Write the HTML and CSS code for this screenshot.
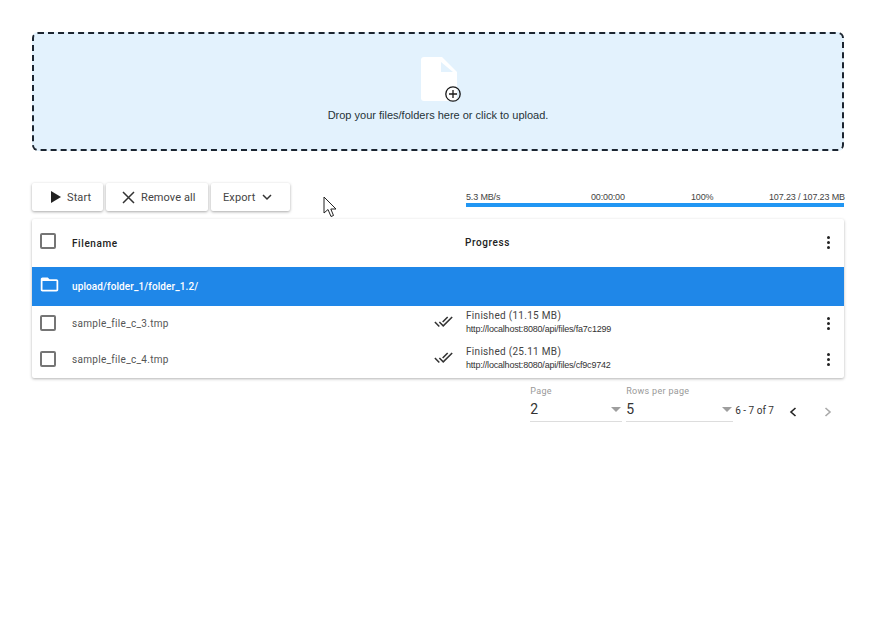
FILE: index.html
```html
<!DOCTYPE html>
<html lang="en">
<head>
    <meta charset="UTF-8">
    <title>File upload</title>
    <link rel="stylesheet" href="styles.css">
</head>
<body>
    <div class="container">
        <div class="dropzone">
            <div class="drop-icon">
                <svg width="36" height="44" viewBox="0 0 36 44">
                    <path class="file-shape" d="M3 0H21L36 15V41a3 3 0 0 1-3 3H3a3 3 0 0 1-3-3V3a3 3 0 0 1 3-3Z"/>
                    <path class="file-fold" d="M20 5V15H32Z"/>
                </svg>
                <svg class="plus-icon" width="18" height="18" viewBox="0 0 18 18">
                    <circle cx="9" cy="9" r="7.2" fill="none" stroke="#1a1a1a" stroke-width="1.3"/>
                    <path d="M9 5V13M5 9H13" stroke="#1a1a1a" stroke-width="1.3"/>
                </svg>
            </div>
            <p class="drop-text">Drop your files/folders here or click to upload.</p>
        </div>

        <div class="toolbar">
            <div class="buttons">
                <button class="btn btn-start">
                    <svg width="10" height="12" viewBox="0 0 10 12"><path d="M0 0L10 6L0 12Z" fill="#222"/></svg>
                    Start
                </button>
                <button class="btn btn-remove">
                    <svg width="13" height="13" viewBox="0 0 13 13"><path d="M1 1L12 12M12 1L1 12" stroke="#333" stroke-width="1.5"/></svg>
                    Remove all
                </button>
                <button class="btn btn-export">
                    Export
                    <svg width="10" height="7" viewBox="0 0 10 7"><path d="M1 1L5 5L9 1" fill="none" stroke="#333" stroke-width="1.5"/></svg>
                </button>
            </div>
            <div class="total">
                <div class="total-stats">
                    <span>5.3 MB/s</span>
                    <span>00:00:00</span>
                    <span>100%</span>
                    <span class="total-size">107.23 / 107.23 MB</span>
                </div>
                <div class="total-bar"></div>
            </div>
        </div>

        <div class="table">
            <div class="row row-head">
                <span class="checkbox"></span>
                <span class="col-name">Filename</span>
                <span class="col-progress">Progress</span>
                <span class="dots"><i></i><i></i><i></i></span>
            </div>
            <div class="row row-folder">
                <svg class="folder-icon" width="21" height="21" viewBox="0 0 24 24">
                    <path d="M20 6h-8l-2-2H4c-1.1 0-1.99.9-1.99 2L2 18c0 1.1.9 2 2 2h16c1.1 0 2-.9 2-2V8c0-1.1-.9-2-2-2zm0 12H4V8h16v10z" fill="#fff"/>
                </svg>
                <span class="col-name">upload/folder_1/folder_1.2/</span>
            </div>
            <div class="row row-file">
                <span class="checkbox"></span>
                <span class="col-name">sample_file_c_3.tmp</span>
                <svg class="done-icon" width="19" height="19" viewBox="0 0 24 24">
                    <path d="M18 7l-1.41-1.41-6.34 6.34 1.41 1.41L18 7zm4.24-1.41L11.66 16.17 7.48 12l-1.41 1.41L11.66 19l12-12-1.42-1.41zM.41 13.41L6 19l1.41-1.41L1.83 12 .41 13.41z" fill="#333"/>
                </svg>
                <div class="file-progress">
                    <div class="file-status">Finished (11.15 MB)</div>
                    <div class="file-url">http://localhost:8080/api/files/fa7c1299</div>
                </div>
                <span class="dots"><i></i><i></i><i></i></span>
            </div>
            <div class="row row-file">
                <span class="checkbox"></span>
                <span class="col-name">sample_file_c_4.tmp</span>
                <svg class="done-icon" width="19" height="19" viewBox="0 0 24 24">
                    <path d="M18 7l-1.41-1.41-6.34 6.34 1.41 1.41L18 7zm4.24-1.41L11.66 16.17 7.48 12l-1.41 1.41L11.66 19l12-12-1.42-1.41zM.41 13.41L6 19l1.41-1.41L1.83 12 .41 13.41z" fill="#333"/>
                </svg>
                <div class="file-progress">
                    <div class="file-status">Finished (25.11 MB)</div>
                    <div class="file-url">http://localhost:8080/api/files/cf9c9742</div>
                </div>
                <span class="dots"><i></i><i></i><i></i></span>
            </div>
        </div>

        <div class="pager">
            <div class="field field-page">
                <label>Page</label>
                <div class="field-value">2<span class="caret"></span></div>
            </div>
            <div class="field field-rows">
                <label>Rows per page</label>
                <div class="field-value">5<span class="caret"></span></div>
            </div>
            <span class="pager-range">6 - 7 of 7</span>
            <svg class="pager-prev" width="8" height="10" viewBox="0 0 8 10"><path d="M6.5 1L2 5L6.5 9" fill="none" stroke="#222" stroke-width="1.6"/></svg>
            <svg class="pager-next" width="8" height="10" viewBox="0 0 8 10"><path d="M1.5 1L6 5L1.5 9" fill="none" stroke="#aaa" stroke-width="1.6"/></svg>
        </div>
    </div>

    <svg class="cursor" width="14" height="22" viewBox="0 0 14 22">
        <path d="M1 1V17L5 13.5L8 20.5L10.5 19.5L7.8 13H13Z" fill="#fff" stroke="#222" stroke-width="1"/>
    </svg>
</body>
</html>
```

FILE: styles.css
```css
body {
    font-family: 'Roboto', 'Liberation Sans', sans-serif;
    margin: 0;
    background-color: #fff;
    color: #333;
}

.container {
    padding: 32px;
}

.dropzone {
    height: 119px;
    box-sizing: border-box;
    border: 2px dashed #1c2530;
    border-radius: 6px;
    background-color: #e3f2fd;
    display: flex;
    flex-direction: column;
    align-items: center;
    padding-top: 23px;
}

.drop-icon {
    position: relative;
    height: 44px;
    width: 36px;
    margin-left: 2px;
}

.plus-icon {
    position: absolute;
    left: 23px;
    top: 28px;
}

.file-shape {
    fill: #fff;
}

.file-fold {
    fill: #e3f2fd;
}

.drop-text {
    margin: 7px 0 0;
    font-family: 'Liberation Sans', sans-serif;
    font-size: 11px;
    line-height: 14px;
    color: #263238;
}

.toolbar {
    display: flex;
    justify-content: space-between;
    margin-top: 32px;
}

.buttons {
    display: flex;
    gap: 3px;
}

.btn {
    height: 28px;
    border: none;
    border-radius: 2px;
    background: #fff;
    box-shadow: 0 1px 3px rgba(0,0,0,0.35);
    font-family: inherit;
    font-size: 11px;
    letter-spacing: 0.1px;
    color: #444;
    display: flex;
    align-items: center;
    padding: 0;
}

.btn-start {
    width: 71px;
    padding-left: 19px;
    gap: 6px;
}

.btn-remove {
    width: 102px;
    padding-left: 16px;
    gap: 6px;
}

.btn-export {
    width: 79px;
    padding-left: 12px;
    gap: 7px;
}

.total {
    width: 378px;
}

.total-stats {
    display: grid;
    grid-template-columns: 125px 100px 78px 1fr;
    font-family: 'Liberation Sans', sans-serif;
    font-size: 9px;
    line-height: 12px;
    letter-spacing: -0.15px;
    color: #444;
    padding-top: 8px;
    white-space: nowrap;
}

.total-size {
    justify-self: end;
}

.total-bar {
    height: 4px;
    background-color: #2196f3;
}

.table {
    margin-top: 8px;
    border-radius: 2px;
    background: #fff;
    box-shadow: 0 1px 3px rgba(0,0,0,0.3);
}

.row {
    display: flex;
    align-items: center;
    padding: 0 8px;
}

.row-head {
    height: 48px;
    font-size: 10px;
    font-weight: 500;
    letter-spacing: 0.6px;
    color: #222;
}

.row-folder {
    height: 39px;
    background-color: #1f87e8;
    color: #fff;
    font-size: 10px;
    font-weight: 500;
    letter-spacing: 0.1px;
}

.row-file {
    height: 36px;
    font-size: 10px;
    letter-spacing: 0.3px;
    color: #555;
}

.checkbox {
    width: 12px;
    height: 12px;
    border: 2px solid #757575;
    border-radius: 2px;
    flex: none;
}

.folder-icon {
    flex: none;
    margin-left: -1px;
    margin-right: 12px;
    margin-top: -5px;
}

.row-head .checkbox {
    margin-top: -4px;
}

.row-file .checkbox {
    margin-top: -3px;
}

.col-name {
    margin-left: 16px;
    flex: none;
}

.row-folder .col-name {
    margin-left: 0;
}

.row-head .col-name {
    width: 393px;
}

.row-file .col-name {
    width: 362px;
    margin-top: -1px;
}

.row-head .col-progress {
    flex: 1;
    margin-top: -1px;
}

.done-icon {
    flex: none;
    margin-top: -6px;
    margin-right: 13px;
}

.file-progress {
    flex: 1;
    margin-top: -3px;
}

.file-status {
    font-size: 10px;
    line-height: 13px;
    letter-spacing: 0.3px;
    color: #444;
}

.file-url {
    font-family: 'Liberation Sans', sans-serif;
    font-size: 9px;
    line-height: 13px;
    letter-spacing: -0.2px;
    color: #333;
    margin-top: 1px;
}

.dots {
    display: flex;
    flex-direction: column;
    gap: 2px;
    width: 3px;
    margin-right: 6px;
    margin-top: -1px;
    flex: none;
}

.dots i {
    display: block;
    width: 3px;
    height: 3px;
    border-radius: 50%;
    background-color: #222;
}

.pager {
    display: flex;
    align-items: flex-end;
    justify-content: flex-end;
    margin-top: 6px;
    height: 38px;
}

.field {
    flex: none;
}

.field label {
    display: block;
    font-size: 9px;
    line-height: 11px;
    color: #999;
    letter-spacing: 0.3px;
    margin-bottom: 2px;
}

.field-value {
    position: relative;
    height: 23px;
    line-height: 20px;
    box-sizing: border-box;
    border-bottom: 1px solid #ddd;
    font-size: 14px;
    color: #333;
}

.field-page {
    width: 92px;
    margin-right: 4px;
}

.field-rows {
    width: 107px;
}

.caret {
    position: absolute;
    right: 1px;
    top: 8px;
    border-left: 5px solid transparent;
    border-right: 5px solid transparent;
    border-top: 5px solid #9e9e9e;
}

.pager-range {
    font-size: 10px;
    line-height: 12px;
    color: #333;
    margin: 0 0 5px 2px;
}

.pager-prev {
    margin: 0 0 5px 15px;
}

.pager-next {
    margin: 0 12px 5px 27px;
}

/* mouse pointer caught in the screenshot */
.cursor {
    position: absolute;
    left: 323px;
    top: 196px;
}
```
